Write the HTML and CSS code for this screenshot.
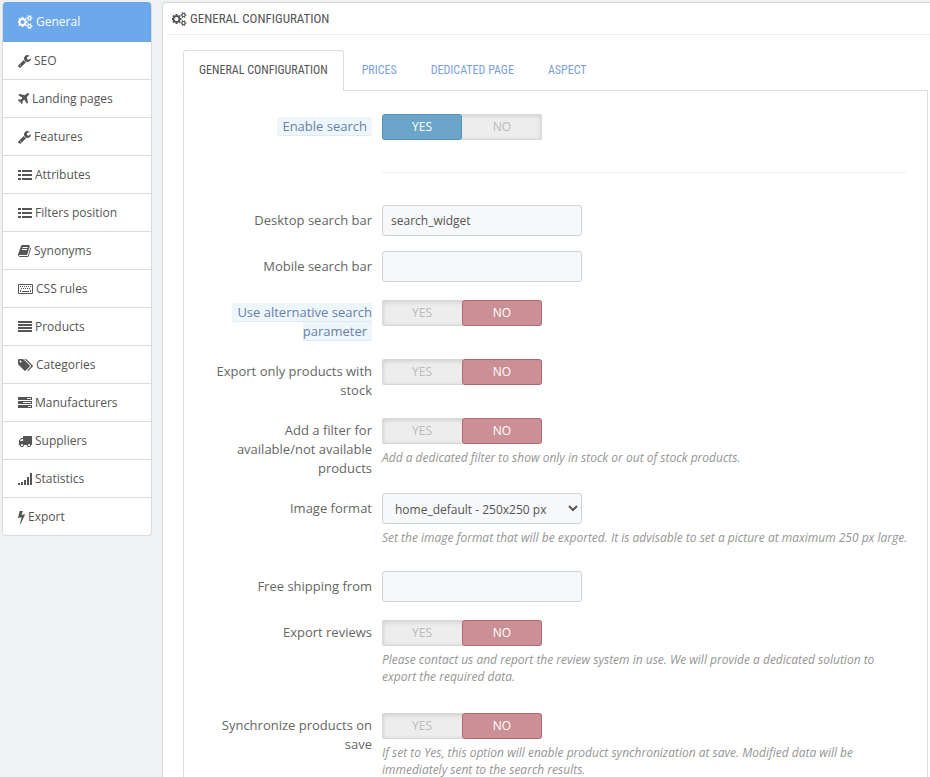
FILE: index.html
```html
<!DOCTYPE html>
<html lang="en">
<head>
<meta charset="utf-8">
<meta name="viewport" content="width=device-width, initial-scale=1">
<title>General configuration</title>
<link rel="stylesheet" href="styles.css">
</head>
<body>
<svg class="sprite" aria-hidden="true">
  <symbol id="cogs" viewBox="0 0 1920 1792"><path d="M832 896q0-106-75-181t-181-75-181 75-75 181 75 181 181 75 181-75 75-181zm768 512q0-52-38-90t-90-38-90 38-38 90q0 53 37.500 90.500t90.500 37.500 90.500-37.500 37.500-90.500zm0-1024q0-52-38-90t-90-38-90 38-38 90q0 53 37.500 90.500t90.500 37.500 90.500-37.500 37.500-90.500zm-384 421v185q0 10-7 19.500t-16 10.500l-155 24q-11 35-32 76 34 48 90 115 7 11 7 20 0 12-7 19-23 30-82.500 89.500t-78.500 59.500q-11 0-21-7l-115-90q-37 19-77 31-11 108-23 155-7 24-30 24h-186q-11 0-20-7.500t-10-17.500l-23-153q-34-10-75-31l-118 89q-7 7-20 7-11 0-21-8-144-133-144-160 0-9 7-19 10-14 41-53t47-61q-23-44-35-82l-152-24q-10-1-17-9.500t-7-19.500v-185q0-10 7-19.500t16-10.500l155-24q11-35 32-76-34-48-90-115-7-11-7-20 0-12 7-20 22-30 82-89t79-59q11 0 21 7l115 90q34-18 77-32 11-108 23-154 7-24 30-24h186q11 0 20 7.500t10 17.500l23 153q34 10 75 31l118-89q8-7 20-7 11 0 21 8 144 133 144 160 0 8-7 19-12 16-42 54t-45 60q23 48 34 82l152 23q10 2 17 10.500t7 19.500zm640 533v140q0 16-149 31-12 27-30 52 51 113 51 138 0 4-4 7-122 71-124 71-8 0-46-47t-52-68q-20 2-30 2t-30-2q-14 21-52 68t-46 47q-2 0-124-71-4-3-4-7 0-25 51-138-18-25-30-52-149-15-149-31v-140q0-16 149-31 13-29 30-52-51-113-51-138 0-4 4-7 4-2 35-20t59-34 30-16q8 0 46 46.500t52 67.500q20-2 30-2t30 2q51-71 92-112l6-2q4 0 124 70 4 3 4 7 0 25-51 138 17 23 30 52 149 15 149 31zm0-1024v140q0 16-149 31-12 27-30 52 51 113 51 138 0 4-4 7-122 71-124 71-8 0-46-47t-52-68q-20 2-30 2t-30-2q-14 21-52 68t-46 47q-2 0-124-71-4-3-4-7 0-25 51-138-18-25-30-52-149-15-149-31v-140q0-16 149-31 13-29 30-52-51-113-51-138 0-4 4-7 4-2 35-20t59-34 30-16q8 0 46 46.500t52 67.500q20-2 30-2t30 2q51-71 92-112l6-2q4 0 124 70 4 3 4 7 0 25-51 138 17 23 30 52 149 15 149 31z"/></symbol>
  <symbol id="wrench" viewBox="64 0 1664 1792"><path d="M448 1472q0-26-19-45t-45-19-45 19-19 45 19 45 45 19 45-19 19-45zm644-420l-682 682q-37 37-90 37-52 0-91-37l-106-108q-38-36-38-90 0-53 38-91l681-681q39 98 114.500 173.500t173.500 114.500zm634-435q0 39-23 106-47 134-164.500 217.500t-258.500 83.500q-185 0-316.500-131.500t-131.500-316.500 131.500-316.500 316.500-131.500q58 0 121.500 16.500t107.500 46.500q16 11 16 28t-16 28l-293 169v224l193 107q5-3 79-48.500t135.500-81 70.500-35.500q15 0 23.500 10t8.500 25z"/></symbol>
  <symbol id="plane" viewBox="192 0 1408 1792"><path d="M1568 160q44 52 12 148t-108 172l-161 161 160 696q5 19-12 33l-128 96q-7 6-19 6-4 0-7-1-15-3-21-16l-279-508-259 259 53 194q5 17-8 31l-96 96q-9 9-23 9h-2q-15-2-24-13l-189-252-252-189q-11-7-13-23-1-13 9-25l96-97q9-9 23-9 6 0 8 1l194 53 259-259-508-279q-14-8-17-24-2-16 9-27l128-128q14-13 30-8l665 159 160-160q76-76 172-108t148 12z"/></symbol>
  <symbol id="list" viewBox="0 0 14 14"><path d="M0 2h3v2H0zM0 6h3v2H0zM0 10h3v2H0zM4 2h10v2H4zM4 6h10v2H4zM4 10h10v2H4z"/></symbol>
  <symbol id="book" viewBox="64 0 1664 1792"><path d="M1703 478q40 57 18 129l-275 906q-19 64-76.500 107.500t-122.500 43.500h-923q-77 0-148.500-53.500t-99.500-131.500q-24-67-2-127 0-4 3-27t4-37q1-8-3-21.500t-3-19.500q2-11 8-21t16.500-23.500 16.500-23.500q23-38 45-91.500t30-91.500q3-10 .5-30t-.5-28q3-11 17-28t17-23q21-36 42-92t25-90q1-9-2.500-32t.5-28q4-13 22-30.500t22-22.500q19-26 42.500-84.500t27.500-96.500q1-8-3-25.500t-2-26.500q2-8 9-18t18-23 17-21q8-12 16.500-30.500t15-35 16-36 19.500-32 26.500-23.500 36-11.500 47.500 5.500l-1 3q38-9 51-9h761q74 0 114 56t18 130l-274 906q-36 119-71.500 153.500t-128.500 34.500h-869q-27 0-38 15-11 16-1 43 24 70 144 70h923q29 0 56-15.500t35-41.500l300-987q7-22 5-57 38 15 59 43zm-1064 2q-4 13 2 22.500t20 9.500h608q13 0 25.500-9.500t16.500-22.500l21-64q4-13-2-22.500t-20-9.500h-608q-13 0-25.500 9.500t-16.500 22.500zm-83 256q-4 13 2 22.500t20 9.500h608q13 0 25.500-9.500t16.500-22.500l21-64q4-13-2-22.500t-20-9.500h-608q-13 0-25.500 9.500t-16.500 22.500z"/></symbol>
  <symbol id="keyboard" viewBox="0 0 15 14"><path fill-rule="evenodd" d="M1 2h13q1 0 1 1v8q0 1-1 1H1q-1 0-1-1V3q0-1 1-1zM1 3v8h13V3z"/><path d="M2 4h1v1H2zM4 4h1v1H4zM6 4h1v1H6zM8 4h1v1H8zM10 4h1v1h-1zM12 4h1v1h-1zM3 6h1v1H3zM5 6h1v1H5zM7 6h1v1H7zM9 6h1v1H9zM11 6h1v1h-1zM2 8h1v2H2zM4 9h7v1H4zM12 8h1v2h-1z"/></symbol>
  <symbol id="lines" viewBox="0 0 14 14"><path d="M0 1h14v2H0zM0 4h14v2H0zM0 7h14v2H0zM0 10h14v2H0z"/></symbol>
  <symbol id="tags" viewBox="0 0 1920 1792"><path d="M448 448q0-53-37.500-90.500t-90.500-37.500-90.500 37.500-37.500 90.500 37.500 90.500 90.500 37.500 90.500-37.500 37.500-90.500zm1067 576q0 53-37 90l-491 492q-39 37-91 37-53 0-90-37l-715-716q-38-37-64.500-101t-26.500-117v-416q0-52 38-90t90-38h416q53 0 117 26.500t102 64.500l715 714q37 39 37 91zm384 0q0 53-37 90l-491 492q-39 37-91 37-36 0-59-14t-53-45l470-470q37-37 37-90 0-52-37-91l-715-714q-38-38-102-64.500t-117-26.500h224q53 0 117 26.500t102 64.500l715 714q37 39 37 91z"/></symbol>
  <symbol id="tasks" viewBox="0 0 14 14"><path fill-rule="evenodd" d="M0 1h14v3H0zM9 2v1h4V2zM0 5h14v3H0zM5 6v1h8V6zM0 9h14v3H0zM10 10v1h3v-1z"/></symbol>
  <symbol id="truck" viewBox="0 0 1792 1792"><path d="M640 1408q0-52-38-90t-90-38-90 38-38 90 38 90 90 38 90-38 38-90zm-384-512h384v-256h-158q-13 0-22 9l-195 195q-9 9-9 22v30zm1280 512q0-52-38-90t-90-38-90 38-38 90 38 90 90 38 90-38 38-90zm256-1088v1024q0 15-4 26.500t-13.500 18.500-16.500 11.500-23.500 6-22.500 2-25.500 0-22.500-.5q0 106-75 181t-181 75-181-75-75-181h-384q0 106-75 181t-181 75-181-75-75-181h-64q-3 0-22.500.5t-25.500 0-22.500-2-23.500-6-16.500-11.500-13.500-18.500-4-26.500q0-26 19-45t45-19v-320q0-8-.5-35t0-38 2.500-34.500 6.500-37 14-30.500 22.500-30l198-198q19-19 50.500-32t58.500-13h160v-192q0-26 19-45t45-19h1024q26 0 45 19t19 45z"/></symbol>
  <symbol id="signal" viewBox="0 0 14 14"><path d="M0 11h2v2H0zM3 10h2v3H3zM6 8h2v5H6zM9 5h2v8H9zM12 1h2v12h-2z"/></symbol>
  <symbol id="bolt" viewBox="448 0 896 1792"><path d="M1333 566q18 20 7 44l-540 1157q-13 25-42 25-4 0-14-2-17-5-25.500-19t-4.500-30l197-808-406 101q-4 1-12 1-18 0-31-11-18-15-13-39l201-825q4-14 16-23t28-9h328q19 0 32 12.500t13 29.500q0 8-5 18l-171 463 396-98q8-2 12-2 19 0 34 15z"/></symbol>
</svg>

<div class="page">
  <nav class="menu" aria-label="Sections">
    <a class="item active" href="#general"><svg class="icon w15"><use href="#cogs"/></svg>General</a>
    <a class="item" href="#seo"><svg class="icon w13"><use href="#wrench"/></svg>SEO</a>
    <a class="item" href="#landing"><svg class="icon w11"><use href="#plane"/></svg>Landing pages</a>
    <a class="item" href="#features"><svg class="icon w13"><use href="#wrench"/></svg>Features</a>
    <a class="item" href="#attributes"><svg class="icon w14"><use href="#list"/></svg>Attributes</a>
    <a class="item" href="#filters"><svg class="icon w14"><use href="#list"/></svg>Filters position</a>
    <a class="item" href="#synonyms"><svg class="icon w13"><use href="#book"/></svg>Synonyms</a>
    <a class="item" href="#css"><svg class="icon w15"><use href="#keyboard"/></svg>CSS rules</a>
    <a class="item" href="#products"><svg class="icon w14"><use href="#lines"/></svg>Products</a>
    <a class="item" href="#categories"><svg class="icon w15"><use href="#tags"/></svg>Categories</a>
    <a class="item" href="#manufacturers"><svg class="icon w14"><use href="#tasks"/></svg>Manufacturers</a>
    <a class="item" href="#suppliers"><svg class="icon w14"><use href="#truck"/></svg>Suppliers</a>
    <a class="item" href="#statistics"><svg class="icon w14"><use href="#signal"/></svg>Statistics</a>
    <a class="item" href="#export"><svg class="icon w7"><use href="#bolt"/></svg>Export</a>
  </nav>

  <main class="panel">
    <h1 class="heading"><svg class="icon w15"><use href="#cogs"/></svg>GENERAL CONFIGURATION</h1>
    <div class="tabs">
      <a class="tab current" href="#tab-general">GENERAL CONFIGURATION</a>
      <a class="tab" href="#tab-prices">PRICES</a>
      <a class="tab" href="#tab-page">DEDICATED PAGE</a>
      <a class="tab" href="#tab-aspect">ASPECT</a>
    </div>
    <form class="form">
      <div class="row" role="radiogroup" aria-labelledby="l-enable">
        <div class="label" id="l-enable"><span class="hint">Enable search</span></div>
        <div class="field">
          <div class="switch">
            <input type="radio" name="enable" id="enable-y" checked><label class="yes" for="enable-y">YES</label>
            <input type="radio" name="enable" id="enable-n"><label class="no" for="enable-n">NO</label>
          </div>
        </div>
      </div>
      <div class="row"><hr class="rule"></div>
      <div class="row">
        <label class="label" for="desktop">Desktop search bar</label>
        <div class="field"><input class="control" type="text" id="desktop" value="search_widget"></div>
      </div>
      <div class="row">
        <label class="label" for="mobile">Mobile search bar</label>
        <div class="field"><input class="control" type="text" id="mobile"></div>
      </div>
      <div class="row" role="radiogroup" aria-labelledby="l-alt">
        <div class="label" id="l-alt"><span class="hint">Use alternative search parameter</span></div>
        <div class="field">
          <div class="switch">
            <input type="radio" name="alt" id="alt-y"><label class="yes" for="alt-y">YES</label>
            <input type="radio" name="alt" id="alt-n" checked><label class="no" for="alt-n">NO</label>
          </div>
        </div>
      </div>
      <div class="row" role="radiogroup" aria-labelledby="l-stock">
        <div class="label" id="l-stock">Export only products with stock</div>
        <div class="field">
          <div class="switch">
            <input type="radio" name="stock" id="stock-y"><label class="yes" for="stock-y">YES</label>
            <input type="radio" name="stock" id="stock-n" checked><label class="no" for="stock-n">NO</label>
          </div>
        </div>
      </div>
      <div class="row" role="radiogroup" aria-labelledby="l-avail">
        <div class="label" id="l-avail">Add a filter for available/not available products</div>
        <div class="field">
          <div class="switch">
            <input type="radio" name="avail" id="avail-y"><label class="yes" for="avail-y">YES</label>
            <input type="radio" name="avail" id="avail-n" checked><label class="no" for="avail-n">NO</label>
          </div>
          <p class="help">Add a dedicated filter to show only in stock or out of stock products.</p>
        </div>
      </div>
      <div class="row">
        <label class="label" for="format">Image format</label>
        <div class="field">
          <select class="control" id="format"><option>home_default - 250x250 px</option></select>
          <p class="help">Set the image format that will be exported. It is advisable to set a picture at maximum 250 px large.</p>
        </div>
      </div>
      <div class="row">
        <label class="label" for="shipping">Free shipping from</label>
        <div class="field"><input class="control" type="text" id="shipping"></div>
      </div>
      <div class="row" role="radiogroup" aria-labelledby="l-reviews">
        <div class="label" id="l-reviews">Export reviews</div>
        <div class="field">
          <div class="switch">
            <input type="radio" name="reviews" id="reviews-y"><label class="yes" for="reviews-y">YES</label>
            <input type="radio" name="reviews" id="reviews-n" checked><label class="no" for="reviews-n">NO</label>
          </div>
          <p class="help">Please contact us and report the review system in use. We will provide a dedicated solution to export the required data.</p>
        </div>
      </div>
      <div class="row" role="radiogroup" aria-labelledby="l-sync">
        <div class="label" id="l-sync">Synchronize products on save</div>
        <div class="field">
          <div class="switch">
            <input type="radio" name="sync" id="sync-y"><label class="yes" for="sync-y">YES</label>
            <input type="radio" name="sync" id="sync-n" checked><label class="no" for="sync-n">NO</label>
          </div>
          <p class="help">If set to Yes, this option will enable product synchronization at save. Modified data will be immediately sent to the search results.</p>
        </div>
      </div>
    </form>
  </main>
</div>
</body>
</html>
```
FILE: styles.css
```css
* { box-sizing: border-box; }

html { overflow: hidden; }

body {
  margin: 0;
  background: #eff1f2;
  color: #555;
  font: 12px/17px "Open Sans", "Noto Sans", sans-serif;
}

a { text-decoration: none; }

.sprite { display: none; }

.icon { height: 14px; flex: none; fill: currentColor; }
.w7 { width: 7px; }
.w11 { width: 11px; }
.w13 { width: 13px; }
.w14 { width: 14px; }
.w15 { width: 15px; }

.page {
  display: grid;
  grid-template-columns: 150px 1fr;
  gap: 10px;
  align-items: start;
  padding: 2px 0 0 2px;
}

/* Side menu */
.menu {
  border: 1px solid #d9dbdd;
  border-top: 0;
  border-radius: 4px;
  background: #fff;
  overflow: hidden;
}

.item {
  display: flex;
  align-items: center;
  gap: 3px;
  padding: 10px 15px;
  border-bottom: 1px solid #d9dbdd;
  color: #555;
}

.item:last-child { border-bottom: 0; }

.item.active {
  margin: 0 -1px;
  padding: 11px 16px;
  border-color: #6ca8ea;
  background: #6ca8ea;
  color: #fff;
}

/* Main panel */
.panel {
  border: 1px solid #d3d8db;
  border-right: 0;
  border-radius: 5px 0 0 0;
  background: #fff;
  min-width: 0;
}

.heading {
  display: flex;
  align-items: center;
  gap: 3px;
  height: 32px;
  margin: 0 0 0 4px;
  padding-left: 5px;
  border-bottom: 1px solid #eee;
  font: 13px/17px "Ubuntu Condensed", "Roboto Condensed", "Liberation Sans Narrow", sans-serif;
}

.tabs {
  display: flex;
  gap: 2px;
  margin: 15px 0 -1px 20px;
}

.tab {
  padding: 11px 15px;
  border: 1px solid transparent;
  color: #7a9fdc;
  font: 12px/17px "Ubuntu Condensed", "Roboto Condensed", "Liberation Sans Narrow", sans-serif;
}

.tab.current {
  position: relative;
  border-color: #ddd;
  border-bottom-color: #fff;
  border-radius: 3px 3px 0 0;
  background: #fff;
  color: #555;
}

.form {
  display: flex;
  flex-direction: column;
  gap: 15px;
  margin: 0 2px 0 20px;
  padding: 20px 16px 0 20px;
  border: 1px solid #ddd;
  border-bottom: 0;
}

.row {
  display: grid;
  grid-template-columns: 168px 1fr;
  column-gap: 10px;
}

.label {
  padding-top: 6px;
  color: #666;
  font-size: 13px;
  line-height: 19px;
  text-align: right;
}

.hint {
  padding: 0 5px;
  border-bottom: 1px solid #dfeaf2;
  border-radius: 3px;
  background: #edf6fb;
  color: #6b7fa8;
}

.rule {
  grid-column: 2;
  height: 1px;
  margin: 17px 4px 17px 0;
  border: 0;
  background: #eee;
}

.control {
  display: block;
  width: 200px;
  height: 31px;
  padding: 6px 8px;
  border: 1px solid #ccd3d6;
  border-radius: 3px;
  background: #f6f8fa;
  color: #555;
  font: inherit;
}

.switch {
  display: grid;
  grid-template-columns: 1fr 1fr;
  position: relative;
  width: 160px;
  height: 26px;
  margin-top: 3px;
  border-radius: 3px;
  background: #ededed;
  box-shadow: inset 0 0 0 1px #d8d8d8, inset 0 1px 4px 1px #ccc;
}

.switch input {
  position: absolute;
  margin: 0;
  opacity: 0;
  pointer-events: none;
}

.switch label {
  border: 1px solid transparent;
  border-radius: 3px;
  color: #bbb;
  line-height: 24px;
  text-align: center;
}

.switch input:checked + label { color: #fff; }
.switch input:checked + .yes { border-color: #5491b3; background: #6ba6ca; }
.switch input:checked + .no { border-color: #b3686f; background: #cb9095; }

.help {
  margin: 5px 0 10px;
  color: #959595;
  font-style: italic;
}
```
